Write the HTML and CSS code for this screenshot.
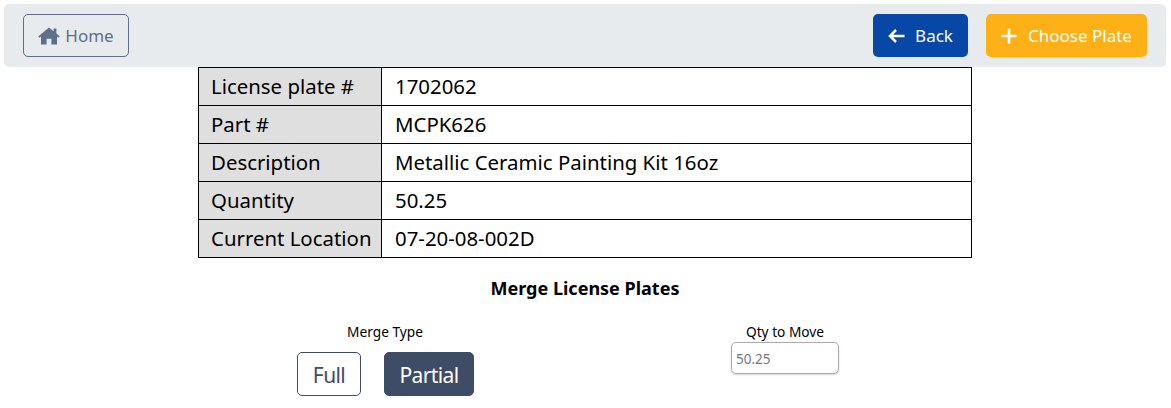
FILE: index.html
```html
<!DOCTYPE html>
<html lang="en">
<head>
<meta charset="utf-8">
<title>Merge License Plates</title>
<link rel="stylesheet" href="styles.css">
</head>
<body>
<nav class="navbar">
  <button class="btn btn-home">
    <svg class="icon-home" viewBox="0 0 22 18"><path fill="currentColor" d="M11 0.6 15.6 4.3V1.6H18.4V6.6L21.8 9.4 20.6 10.8 19 9.6V17.4H13.4V11.8H8.6V17.4H3V9.6L1.4 10.8 0.2 9.4Z"/></svg>
    Home
  </button>
  <div class="nav-actions">
    <button class="btn btn-back">
      <svg class="icon-back" viewBox="0 0 17 16"><path d="M8 2 2 8l6 6M2.5 8H16.5" fill="none" stroke="currentColor" stroke-width="2.5"/></svg>
      Back
    </button>
    <button class="btn btn-choose">
      <svg class="icon-plus" viewBox="0 0 16 16"><path d="M8 .5v15M.5 8h15" fill="none" stroke="currentColor" stroke-width="2.6"/></svg>
      Choose Plate
    </button>
  </div>
</nav>
<table class="info">
  <tr><th>License plate #</th><td>1702062</td></tr>
  <tr><th>Part #</th><td>MCPK626</td></tr>
  <tr><th>Description</th><td>Metallic Ceramic Painting Kit 16oz</td></tr>
  <tr><th>Quantity</th><td>50.25</td></tr>
  <tr><th>Current Location</th><td>07-20-08-002D</td></tr>
</table>
<h1 class="title">Merge License Plates</h1>
<section class="form-grid">
  <div class="field">
    <label class="label">Merge Type</label>
    <div class="toggle">
      <button class="opt">Full</button>
      <button class="opt opt-active">Partial</button>
    </div>
  </div>
  <div class="field">
    <label class="label" for="qty">Qty to Move</label>
    <input class="qty" id="qty" placeholder="50.25">
  </div>
</section>
</body>
</html>
```
FILE: styles.css
```css
* { box-sizing: border-box; }
html, body { margin: 0; padding: 0; }
body {
  height: 408px;
  overflow: hidden;
  background: #fff;
  color: #000;
  font-family: "Noto Sans", "Open Sans", sans-serif;
  padding: 4px 5px 0 4px;
}
.navbar {
  height: 63px;
  background: #e8ebee;
  border-radius: 5px;
  padding: 0 19px;
  display: flex;
  align-items: center;
  justify-content: space-between;
}
.nav-actions { display: flex; gap: 18px; }
.btn {
  height: 43px;
  border-radius: 5px;
  font: inherit;
  font-size: 17px;
  display: flex;
  align-items: center;
  justify-content: center;
  padding: 0;
  border: 1px solid transparent;
}
.btn-home {
  width: 106px;
  gap: 5px;
  background: transparent;
  border-color: #5f6f8a;
  color: #5f6f8a;
}
.icon-home { width: 22px; height: 18px; }
.icon-back { width: 17px; height: 16px; }
.icon-plus { width: 16px; height: 16px; }
.btn-back {
  width: 95px;
  gap: 10px;
  background: #0747a6;
  color: #fff;
}
.btn-choose {
  width: 161px;
  gap: 11px;
  background: #fdb117;
  color: #fff;
}
.info {
  width: 774px;
  margin: 0 auto;
  border-collapse: collapse;
  table-layout: fixed;
  font-size: 20.4px;
}
.info tr { height: 38px; }
.info th, .info td {
  border: 1px solid #000;
  padding: 0 12px;
  font-weight: 400;
  text-align: left;
  line-height: 1;
}
.info td { padding-left: 13px; }
.info th { width: 183px; background: #dfdfdf; white-space: nowrap; }
.title {
  margin: 18px 0 0;
  text-align: center;
  font-size: 18px;
  line-height: 24px;
  font-weight: 700;
}
.form-grid {
  width: 800px;
  margin: 22px auto 0;
  display: grid;
  grid-template-columns: 1fr 1fr;
}
.field {
  display: flex;
  flex-direction: column;
  align-items: center;
}
.label { font-size: 13.7px; line-height: 19px; margin-bottom: 1px; }
.toggle { display: flex; gap: 23px; margin-top: 10px; }
.opt {
  height: 44px;
  border-radius: 5px;
  font: inherit;
  font-size: 21px;
  letter-spacing: -0.6px;
  padding: 1px 0 0 1px;
  border: 1px solid #3e4c66;
  background: #fff;
  color: #3e4c66;
  width: 64px;
}
.opt-active { width: 90px; background: #3e4c66; color: #fff; }
.qty {
  width: 108px;
  height: 32px;
  border: 1px solid #aaa;
  border-radius: 5px;
  padding: 1px 5px 0 4px;
  font: inherit;
  font-size: 13.5px;
  box-shadow: 0 1px 2px rgba(0,0,0,.15);
}
.qty::placeholder { color: #777; opacity: 1; }
```
